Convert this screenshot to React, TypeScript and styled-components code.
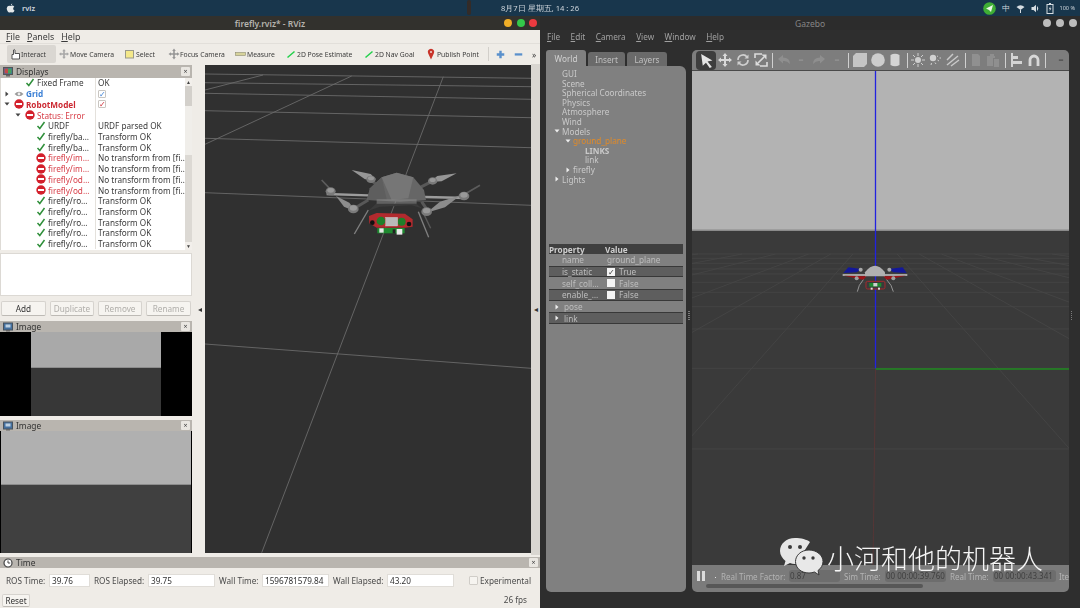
import React from "react";
import styled, { createGlobalStyle } from "styled-components";

const Global = createGlobalStyle`
  html, body { margin: 0; padding: 0; background: #222; overflow: hidden; }
  * { box-sizing: border-box; }
`;

const UI = `"Noto Sans", "Open Sans", sans-serif`;

const Page = styled.div`
  position: relative;
  width: 1080px;
  height: 608px;
  overflow: hidden;
  font-family: ${UI};
`;
const Screen = styled.div`
  width: 1080px;
  height: 608px;
  display: flex;
  flex-direction: column;
  filter: blur(0.55px);
`;
const TopBar = styled.header`
  height: 16px;
  flex: none;
  background: #18364c;
  color: #cfd6dc;
  font-size: 7.6px;
  display: grid;
  grid-template-columns: 1fr auto 1fr;
  align-items: center;
`;
const TopLeft = styled.div`
  display: flex;
  align-items: center;
  gap: 7px;
  padding-left: 6px;
  font-size: 7.5px;
  font-weight: 600;
`;
const TopClock = styled.div`
  position: relative;
`;
const Figure = styled.span`
  position: absolute;
  left: -34px;
  top: -3px;
  width: 4px;
  height: 15px;
  border-radius: 2px;
  background: #332b28;
`;
const TopRight = styled.div`
  display: flex;
  justify-content: flex-end;
  align-items: center;
  gap: 6px;
  padding-right: 5px;
  font-size: 7.5px;
`;
const Small = styled.span`
  font-size: 5.5px;
`;
const Windows = styled.div`
  flex: 1;
  min-height: 0;
  display: grid;
  grid-template-columns: 540px 540px;
`;

/* ---------- RViz ---------- */
const Rviz = styled.section`
  display: flex;
  flex-direction: column;
  min-height: 0;
  background: #efece7;
  color: #3a3a3a;
  font-size: 8.2px;
`;
const TitleBar = styled.div<{ $dark?: boolean }>`
  height: 14px;
  flex: none;
  position: relative;
  display: flex;
  align-items: center;
  justify-content: center;
  background: ${(p) => (p.$dark ? "#2c2c2c" : "#32312d")};
  color: ${(p) => (p.$dark ? "#858585" : "#b5b3ad")};
  font-size: 8.5px;
  font-weight: ${(p) => (p.$dark ? 400 : 600)};
`;
const Lights = styled.div`
  position: absolute;
  right: 3px;
  top: 3px;
  display: flex;
  gap: 4.5px;
`;
const Light = styled.span<{ $c: string }>`
  width: 8px;
  height: 8px;
  border-radius: 50%;
  background: ${(p) => p.$c};
`;
const MenuBar = styled.nav<{ $dark?: boolean }>`
  height: 13px;
  flex: none;
  display: flex;
  align-items: center;
  font-size: ${(p) => (p.$dark ? "8.2px" : "8.8px")};
  padding-left: ${(p) => (p.$dark ? "7px" : "6px")};
  gap: ${(p) => (p.$dark ? "10.5px" : "7px")};
  background: ${(p) => (p.$dark ? "#2e2e2e" : "#efece7")};
  color: ${(p) => (p.$dark ? "#a0a0a0" : "#3a3a3a")};
`;
const Toolbar = styled.div`
  height: 21px;
  flex: none;
  display: flex;
  align-items: center;
  padding-left: 7px;
  background: #efece7;
  border-top: 1px solid #e2dfda;
`;
const ToolButton = styled.div<{ $w: number; $active?: boolean }>`
  width: ${(p) => p.$w}px;
  height: 18px;
  flex: none;
  display: flex;
  align-items: center;
  padding-left: 2px;
  font-size: 6.8px;
  white-space: nowrap;
  border-radius: 2px;
  background: ${(p) => (p.$active ? "#dad7d2" : "transparent")};
`;
const ToolIcon = styled.svg`
  width: 12px;
  height: 12px;
  flex: none;
`;
const ToolSep = styled.span`
  width: 1px;
  height: 14px;
  margin: 0 7px 0 6px;
  background: #d2cfca;
`;
const ZoomGlyph = styled.svg`
  width: 9px;
  height: 9px;
  margin-right: 9px;
  flex: none;
`;
const Main = styled.div`
  flex: 1;
  min-height: 0;
  display: flex;
`;
const LeftDock = styled.aside`
  width: 192px;
  flex: none;
  display: flex;
  flex-direction: column;
  padding-top: 1px;
`;
const DockTitle = styled.div<{ $h: number; $mt?: number }>`
  height: ${(p) => p.$h}px;
  margin-top: ${(p) => p.$mt ?? 0}px;
  flex: none;
  display: flex;
  align-items: center;
  background: #b9b5af;
  padding: 0 2px 0 3px;
  gap: 3px;
  font-size: 8.4px;
  color: #333;
`;
const DockName = styled.span`
  flex: 1;
`;
const CloseBox = styled.span`
  width: 9px;
  height: 9px;
  background: #e9e6e1;
  color: #444;
  font-size: 7px;
  line-height: 9px;
  text-align: center;
  border-radius: 1px;
`;
const Tree = styled.div`
  height: 172px;
  flex: none;
  display: flex;
  background: #fff;
  overflow: hidden;
  border-left: 1px solid #dedbd6;
`;
const TreeRows = styled.div`
  flex: 1;
  min-width: 0;
  margin-top: -0.6px;
`;
const TreeRow = styled.div`
  height: 10.73px;
  display: grid;
  grid-template-columns: 95px 1fr;
  align-items: center;
  white-space: nowrap;
`;
const NameCell = styled.div<{ $level: number }>`
  display: flex;
  align-items: center;
  height: 100%;
  padding-left: ${(p) => 1 + p.$level * 11}px;
  border-right: 1px solid #e4e1dc;
`;
const ArrowSlot = styled.span`
  width: 11px;
  display: flex;
  justify-content: flex-start;
  padding-left: 1.5px;
`;
const StatusSlot = styled.span`
  width: 11px;
  height: 10px;
  margin-right: 2px;
  display: flex;
  align-items: center;
  justify-content: center;
`;
const RowName = styled.span<{ $tone?: string }>`
  color: ${(p) =>
    p.$tone === "err" ? "#d8404a" : p.$tone === "errb" ? "#cc2a33" : p.$tone === "blue" ? "#3a7fd5" : "#3a3a3a"};
  font-weight: ${(p) => (p.$tone === "errb" || p.$tone === "blue" ? 700 : 400)};
`;
const ValueCell = styled.div`
  padding-left: 2px;
  display: flex;
  align-items: center;
`;
const MiniCheck = styled.span<{ $c: string }>`
  width: 8px;
  height: 8px;
  border: 1px solid #c9c6c1;
  border-radius: 1px;
  color: ${(p) => p.$c};
  display: flex;
  align-items: center;
  justify-content: center;
  background: #fff;
  font-size: 8px;
  line-height: 1;
`;
const ScrollCol = styled.div`
  width: 7px;
  flex: none;
  display: flex;
  flex-direction: column;
  background: #dcd9d4;
`;
const ScrollEnd = styled.div`
  height: 8px;
  flex: none;
  background: #f2efeb;
  color: #444;
  font-size: 5px;
  line-height: 8px;
  text-align: center;
`;
const ScrollThumb = styled.div`
  height: 20px;
  flex: none;
  background: #d3d0cb;
`;
const ScrollLight = styled.div`
  height: 49px;
  flex: none;
  background: #f0eeea;
`;
const ScrollFill = styled.div`
  flex: 1;
`;
const EmptyBox = styled.div`
  height: 43px;
  margin-top: 3px;
  flex: none;
  background: #fff;
  border: 1px solid #dcd9d4;
`;
const ButtonRow = styled.div`
  height: 15px;
  margin-top: 5px;
  flex: none;
  display: grid;
  grid-template-columns: 45px 44px 44px 45px;
  gap: 4px;
  padding-left: 1px;
`;
const PlainButton = styled.div<{ $off?: boolean }>`
  border: 1px solid #d6d3ce;
  border-bottom-color: #bdbab5;
  border-radius: 2px;
  background: #f6f4f0;
  display: flex;
  align-items: center;
  justify-content: center;
  font-size: 8.2px;
  color: ${(p) => (p.$off ? "#b0aeaa" : "#333")};
`;
const CameraView = styled.div<{ $h: number; $side: number; $split: number; $top: string; $bottom: string }>`
  height: ${(p) => p.$h}px;
  flex: none;
  border-left: ${(p) => p.$side}px solid #000;
  border-right: ${(p) => p.$side}px solid #000;
  background: linear-gradient(
    to bottom,
    ${(p) => p.$top} ${(p) => p.$split}px,
    #8c8c8c ${(p) => p.$split}px,
    #8c8c8c ${(p) => p.$split + 1}px,
    ${(p) => p.$bottom} ${(p) => p.$split + 1}px
  );
`;
const Sash = styled.div<{ $w: number; $bg: string; $pl?: number }>`
  width: ${(p) => p.$w}px;
  flex: none;
  background: ${(p) => p.$bg};
  display: flex;
  align-items: center;
  justify-content: center;
  padding: 0 0 2px ${(p) => p.$pl ?? 0}px;
  color: #333;
  font-size: 8px;
`;
const Viewport = styled.div`
  width: 326px;
  flex: none;
  margin: 1px 0 2px;
  background: #303030;
`;
const SceneSvg = styled.svg`
  display: block;
  width: 100%;
  height: 100%;
`;
const TimeDock = styled.div`
  height: 53px;
  flex: none;
  padding-top: 2px;
  display: flex;
  flex-direction: column;
`;
const TimeRow = styled.div`
  height: 13px;
  margin-top: 6px;
  flex: none;
  display: flex;
  align-items: center;
  padding-left: 2px;
  font-size: 8.2px;
  color: #4a4a4a;
`;
const TimeLabel = styled.span<{ $w: number }>`
  width: ${(p) => p.$w}px;
  padding-left: 4px;
  white-space: nowrap;
  flex: none;
`;
const TimeInput = styled.span<{ $w: number }>`
  width: ${(p) => p.$w}px;
  height: 13px;
  flex: none;
  background: #fff;
  border: 1px solid #e0ddd8;
  padding-left: 2px;
  line-height: 11px;
  color: #333;
`;
const ExpBox = styled.span`
  width: 9px;
  height: 9px;
  margin: 0 2px 0 15px;
  background: #f6f4f0;
  border: 1px solid #d0cdc8;
  border-radius: 1px;
`;
const BottomRow = styled.div`
  height: 13px;
  margin-top: 7px;
  flex: none;
  display: flex;
  justify-content: space-between;
  padding: 0 13px 0 2px;
  font-size: 8.2px;
  color: #4a4a4a;
`;
const ResetButton = styled(PlainButton)`
  width: 28px;
`;
const Fps = styled.span`
  margin-top: 0;
`;

/* ---------- Gazebo ---------- */
const Gazebo = styled.section`
  display: flex;
  flex-direction: column;
  min-height: 0;
  background: #2e2e2e;
  color: #bcbcbc;
`;
const GzLights = styled.div`
  position: absolute;
  right: 3px;
  top: 3px;
  display: flex;
  gap: 5px;
`;
const GzBody = styled.div`
  flex: 1;
  min-height: 0;
  display: flex;
  padding: 7px 0 16px 6px;
`;
const GzLeft = styled.div`
  width: 140px;
  flex: none;
  display: flex;
  flex-direction: column;
`;
const Tabs = styled.div`
  height: 16px;
  flex: none;
  display: flex;
  gap: 2px;
  align-items: flex-end;
`;
const Tab = styled.div<{ $w: number; $on?: boolean }>`
  width: ${(p) => p.$w}px;
  height: ${(p) => (p.$on ? 16 : 14)}px;
  background: ${(p) => (p.$on ? "#808080" : "#6a6a6a")};
  color: ${(p) => (p.$on ? "#d0d0d0" : "#c0c0c0")};
  border-radius: 3px 3px 0 0;
  display: flex;
  align-items: center;
  justify-content: center;
  font-size: 8.2px;
`;
const GzPanel = styled.div`
  flex: 1;
  background: #808080;
  border-radius: 0 6px 5px 5px;
  padding-top: 3px;
  display: flex;
  flex-direction: column;
  font-size: 8.2px;
  color: #c9c9c9;
`;
const WorldTree = styled.div`
  height: 175px;
  flex: none;
`;
const WorldRow = styled.div<{ $level: number; $tone?: string }>`
  height: 9.6px;
  line-height: 9.6px;
  display: flex;
  align-items: center;
  padding-left: ${(p) => p.$level}px;
  color: ${(p) => (p.$tone === "o" ? "#e08a28" : "#c9c9c9")};
  font-weight: ${(p) => (p.$tone === "b" ? 700 : 400)};
`;
const WorldArrow = styled.span`
  width: 11px;
  display: flex;
  justify-content: center;
  margin-left: -11px;
`;
const PropTable = styled.div`
  margin: 0 3px;
`;
const PropHeader = styled.div`
  height: 10px;
  display: grid;
  grid-template-columns: 56px 1fr;
  align-items: center;
  background: #3f3f3f;
  color: #cfcfcf;
  font-weight: 700;
`;
const PropRow = styled.div<{ $band?: boolean }>`
  height: 11.7px;
  display: grid;
  grid-template-columns: 56px 1fr;
  align-items: center;
  background: ${(p) => (p.$band ? "#5e5e5e" : "#808080")};
  box-shadow: ${(p) => (p.$band ? "inset 0 1px #383838, inset 0 -1px #383838" : "none")};
  color: #bdbdbd;
`;
const PropKey = styled.span<{ $indent?: number }>`
  padding-left: ${(p) => p.$indent ?? 13}px;
  display: flex;
  align-items: center;
  gap: 4px;
  overflow: hidden;
  white-space: nowrap;
`;
const PropVal = styled.span`
  display: flex;
  align-items: center;
  gap: 4px;
  padding-left: 2px;
`;
const PropBox = styled.span`
  width: 8px;
  height: 8px;
  background: #f4f4f4;
  color: #333;
  font-size: 8px;
  line-height: 8px;
  text-align: center;
`;
const GzSash = styled.div<{ $w: number }>`
  width: ${(p) => p.$w}px;
  flex: none;
  display: flex;
  align-items: center;
  justify-content: center;
  color: #777;
  font-size: 6px;
  padding-bottom: 10px;
`;
const SashDots = styled.span`
  width: 1.5px;
  height: 10px;
  background: repeating-linear-gradient(to bottom, #7c7c7c 0 1px, transparent 1px 2px);
`;
const GzCenter = styled.div`
  width: 377px;
  flex: none;
  display: flex;
  flex-direction: column;
`;
const GzToolbar = styled.div`
  height: 21px;
  flex: none;
  display: flex;
  align-items: center;
  padding-left: 4px;
  background: #7d7d7d;
  border-radius: 5px 5px 0 0;
  border-bottom: 1px solid #4a4a4a;
  overflow: hidden;
`;
const GzSlot = styled.div<{ $w: number; $on?: boolean }>`
  width: ${(p) => p.$w}px;
  height: 19px;
  flex: none;
  display: flex;
  align-items: center;
  justify-content: center;
  border-radius: 4px;
  background: ${(p) => (p.$on ? "#3d3d3d" : "transparent")};
`;
const GzSep = styled.span`
  width: 1px;
  height: 15px;
  background: #d0d0d0;
`;
const GzScene = styled.div`
  flex: 1;
  min-height: 0;
  background: #3a3a3a;
`;
const GzStatus = styled.div`
  height: 27px;
  flex: none;
  background: #7b7b7b;
  border-radius: 0 0 5px 5px;
  padding: 4px 0 0 5px;
  display: flex;
  flex-direction: column;
  font-size: 8px;
  color: #b4b4b4;
  overflow: hidden;
`;
const GzStatusLine = styled.div`
  height: 14px;
  flex: none;
  display: flex;
  align-items: center;
  white-space: nowrap;
`;
const PauseBar = styled.span`
  width: 3px;
  height: 10px;
  margin-right: 2px;
  background: #dcdcdc;
`;
const PauseDot = styled.span`
  width: 1.5px;
  height: 1.5px;
  flex: none;
  margin: 3px -1.5px 0 8px;
  background: #e0e0e0;
`;
const StatusLabel = styled.span<{ $w: number; $ml?: number }>`
  width: ${(p) => p.$w}px;
  margin-left: ${(p) => p.$ml ?? 0}px;
  flex: none;
`;
const StatusField = styled.span<{ $w: number }>`
  width: ${(p) => p.$w}px;
  height: 12px;
  line-height: 12px;
  flex: none;
  background: #6d6d6d;
  border-radius: 3px;
  color: #404040;
  padding-left: 1px;
  overflow: hidden;
`;
const HScroll = styled.div`
  width: 217px;
  height: 4px;
  flex: none;
  margin: 1px 0 0 9px;
  border-radius: 2px;
  background: #575757;
`;

/* ---------- Watermark ---------- */
const Watermark = styled.div`
  position: absolute;
  left: 780px;
  top: 528px;
  display: flex;
  align-items: flex-start;
`;
const WaterText = styled.span`
  font-family: "Noto Sans CJK SC", sans-serif;
  font-size: 27px;
  font-weight: 300;
  line-height: 26px;
  margin-top: 17px;
  color: #f6f6f6;
  white-space: nowrap;
`;
const WaterIcon = styled.svg`
  width: 47px;
  height: 50px;
  flex: none;
`;

/* ---------- Little drawings ---------- */
const Check = () => (
  <svg width="10" height="9" viewBox="0 0 10 9">
    <path d="M1.5 5 L3.8 7.5 L8.5 1" fill="none" stroke="#2f8f3a" strokeWidth="1.5" />
  </svg>
);
const Err = () => (
  <svg width="10" height="10" viewBox="0 0 10 10">
    <circle cx="5" cy="5" r="4.7" fill="#d3202c" />
    <rect x="2" y="4" width="6" height="2" fill="#fff" />
  </svg>
);
const Eye = () => (
  <svg width="10" height="8" viewBox="0 0 10 8">
    <path d="M0.5 4 Q5 -0.5 9.5 4 Q5 8.5 0.5 4 Z" fill="#9a9a9a" />
    <circle cx="5" cy="4" r="1.4" fill="#efefef" />
  </svg>
);
const TreeArrow = ({ open, c = "#444" }: { open?: boolean; c?: string }) => (
  <svg width="6" height="6" viewBox="0 0 6 6">
    <path d={open ? "M0.5 1.5 H5.5 L3 4.5 Z" : "M1.5 0.5 V5.5 L4.5 3 Z"} fill={c} />
  </svg>
);
const Monitor = () => (
  <svg width="10" height="10" viewBox="0 0 10 10">
    <rect x="0.5" y="0.5" width="9" height="7" fill="#3b6ea8" stroke="#555" />
    <rect x="1.5" y="1.5" width="3.5" height="5" fill="#c14a4a" />
    <rect x="5" y="1.5" width="3.5" height="5" fill="#4aa05a" />
    <rect x="3" y="8" width="4" height="1.5" fill="#666" />
  </svg>
);
const PicIcon = () => (
  <svg width="10" height="10" viewBox="0 0 10 10">
    <rect x="0.5" y="1" width="9" height="7" fill="#44709f" stroke="#49525c" />
    <rect x="2.5" y="2.5" width="5" height="3" fill="#bcd0e2" />
    <rect x="3" y="8" width="4" height="1.5" fill="#666" />
  </svg>
);
const Clock = () => (
  <svg width="10" height="10" viewBox="0 0 10 10">
    <circle cx="5" cy="5" r="4" fill="#fff" stroke="#444" strokeWidth="1.2" />
    <path d="M5 2.5 V5 H7.2" fill="none" stroke="#444" />
  </svg>
);

const toolIcons: Record<string, React.ReactNode> = {
  interact: (
    <path d="M3 11 V6.5 H4.5 V2 Q5.3 1 6 2 V5.5 H10.5 V11 Z" fill="#fff" stroke="#444" strokeWidth="0.9" />
  ),
  move: (
    <path d="M6 1 L7.8 3.2 H6.8 V5.2 H8.8 V4.2 L11 6 L8.8 7.8 V6.8 H6.8 V8.8 H7.8 L6 11 L4.2 8.8 H5.2 V6.8 H3.2 V7.8 L1 6 L3.2 4.2 V5.2 H5.2 V3.2 H4.2 Z" fill="#a8a8a8" />
  ),
  select: <rect x="1.5" y="2.5" width="8" height="7.5" fill="#f4e88a" stroke="#9a9a8a" />,
  focus: (
    <path d="M6 0.5 L7.8 3 H6.8 V5.2 H9 V4.2 L11.5 6 L9 7.8 V6.8 H6.8 V9 H7.8 L6 11.5 L4.2 9 H5.2 V6.8 H3 V7.8 L0.5 6 L3 4.2 V5.2 H5.2 V3 H4.2 Z" fill="#969696" />
  ),
  measure: <rect x="0.5" y="4.5" width="10" height="3" fill="#d6d29a" stroke="#8e8c70" strokeWidth="0.6" />,
  pose: <path d="M2.5 9.5 L9.5 3.5" stroke="#21d04a" strokeWidth="1.5" />,
  pin: (
    <g>
      <path d="M6 11.5 L3.2 5.5 A3.2 3.2 0 1 1 8.8 5.5 Z" fill="#c8342a" />
      <circle cx="6" cy="4" r="1" fill="#f1d8d4" />
    </g>
  ),
};

const tools = [
  { w: 49, t: "Interact", i: "interact", active: true },
  { w: 66, t: "Move Camera", i: "move" },
  { w: 44, t: "Select", i: "select" },
  { w: 67, t: "Focus Camera", i: "focus" },
  { w: 50, t: "Measure", i: "measure" },
  { w: 78, t: "2D Pose Estimate", i: "pose" },
  { w: 62, t: "2D Nav Goal", i: "pose" },
  { w: 59, t: "Publish Point", i: "pin" },
];

type TreeItem = {
  level: number;
  name: string;
  value?: string;
  status?: "ok" | "err" | "eye";
  tone?: string;
  arrow?: "open" | "closed";
  check?: string;
};
const rows: TreeItem[] = [
  { level: 1, name: "Fixed Frame", value: "OK", status: "ok" },
  { level: 0, name: "Grid", status: "eye", tone: "blue", arrow: "closed", check: "#3a7fd5" },
  { level: 0, name: "RobotModel", status: "err", tone: "errb", arrow: "open", check: "#cc2a33" },
  { level: 1, name: "Status: Error", status: "err", tone: "err", arrow: "open" },
  { level: 2, name: "URDF", value: "URDF parsed OK", status: "ok" },
  { level: 2, name: "firefly/ba…", value: "Transform OK", status: "ok" },
  { level: 2, name: "firefly/ba…", value: "Transform OK", status: "ok" },
  { level: 2, name: "firefly/im…", value: "No transform from [fi…", status: "err", tone: "err" },
  { level: 2, name: "firefly/im…", value: "No transform from [fi…", status: "err", tone: "err" },
  { level: 2, name: "firefly/od…", value: "No transform from [fi…", status: "err", tone: "err" },
  { level: 2, name: "firefly/od…", value: "No transform from [fi…", status: "err", tone: "err" },
  { level: 2, name: "firefly/ro…", value: "Transform OK", status: "ok" },
  { level: 2, name: "firefly/ro…", value: "Transform OK", status: "ok" },
  { level: 2, name: "firefly/ro…", value: "Transform OK", status: "ok" },
  { level: 2, name: "firefly/ro…", value: "Transform OK", status: "ok" },
  { level: 2, name: "firefly/ro…", value: "Transform OK", status: "ok" },
];

const rvizLines = [
  [205, 74, 531, 78.3],
  [205, 82.7, 531, 86.7],
  [205, 93.3, 531, 99.3],
  [205, 110.7, 531, 117.7],
  [205, 138.3, 531, 147.7],
  [205, 192.7, 531, 205.3],
  [205, 344, 531, 368.3],
  [205, 90, 263, 75],
  [205, 144.3, 351.7, 76],
  [443.3, 76.7, 261.7, 552.7],
];

/* drawn in the coordinates of a 3x crop of the viewport */
const RvizDrone = () => (
  <g transform="translate(200 60) scale(0.3333)">
    <g fill="none">
      <path d="M380 402 L505 406" stroke="#9c9c9c" strokeWidth="7" />
      <path d="M675 411 L800 414" stroke="#9c9c9c" strokeWidth="7" />
      <path d="M505 420 L455 450" stroke="#585858" strokeWidth="9" />
      <path d="M665 425 L685 455" stroke="#585858" strokeWidth="9" />
      <path d="M535 378 L510 358" stroke="#585858" strokeWidth="9" />
      <path d="M655 385 L700 362" stroke="#585858" strokeWidth="9" />
      <path d="M505 450 L463 522" stroke="#808080" strokeWidth="4" />
      <path d="M655 455 L686 532" stroke="#808080" strokeWidth="4" />
      <path d="M668 455 L692 505" stroke="#5a5a5a" strokeWidth="4" />
      <path d="M365 360 L395 392" stroke="#5c5c5c" strokeWidth="5" />
      <path d="M840 376 L795 402" stroke="#5c5c5c" strokeWidth="5" />
    </g>
    <path d="M455 330 L512 342 L528 358 L495 358 Z" fill="#969696" />
    <path d="M770 340 L712 348 L690 366 L725 364 Z" fill="#969696" />
    <path d="M408 408 L448 428 L468 455 L432 440 Z" fill="#8c8c8c" />
    <path d="M782 406 L720 425 L680 458 L735 442 Z" fill="#8c8c8c" />
    <path d="M500 420 L510 385 L545 352 L590 338 L640 352 L672 390 L678 420 L600 425 Z" fill="#666" />
    <path d="M545 352 L590 338 L640 352 L625 415 L575 420 Z" fill="#767676" />
    <path d="M510 385 L545 352 L560 418 L502 420 Z" fill="#5e5e5e" />
    <path d="M530 430 L650 432 L665 445 L635 436 L540 440 L505 452 Z" fill="#3b3b3b" />
    <path d="M530 418 H650 V431 H530 Z" fill="#8a8a8a" opacity="0.55" />
    {[
      [392, 394, 12],
      [460, 447, 13],
      [513, 358, 11],
      [698, 363, 11],
      [680, 455, 13],
      [792, 408, 13],
    ].map(([x, y, r], i) => (
      <g key={i}>
        <ellipse cx={x} cy={y} rx={r + 3} ry={r} fill="#7a7a7a" />
        <ellipse cx={x} cy={y - 3} rx={r - 2} ry={r - 5} fill="#999" />
      </g>
    ))}
    <path d="M507 468 L530 459 L615 461 L638 478 V500 L615 503 H530 L508 490 Z" fill="#b12a2e" />
    <circle cx="543" cy="483" r="13" fill="#1f7f2a" />
    <circle cx="605" cy="485" r="12" fill="#1f7f2a" />
    <circle cx="517" cy="488" r="7" fill="#111" />
    <circle cx="627" cy="492" r="7" fill="#111" />
    <rect x="557" y="472" width="36" height="26" fill="#b9b9b9" stroke="#dcdcdc" />
    <rect x="532" y="504" width="82" height="16" fill="#1f8a30" />
    <rect x="538" y="505" width="13" height="13" fill="#e6e6e6" />
    <rect x="590" y="507" width="17" height="17" fill="#ececec" />
    <rect x="578" y="508" width="8" height="12" fill="#222" />
  </g>
);

const gzLevels = [255, 259.3, 264.3, 270, 275, 283.3, 293.3, 307.7, 330, 369.3, 450];
const gzRadial = [-8, -6, -4.5, -3, -2, -1, 1, 2, 3, 4.5, 6, 8];

const GzDrone = () => (
  <g transform="translate(830 250) scale(0.3333)">
    <path d="M40 72 L55 55 L95 60 L80 70 Z" fill="#13189a" />
    <path d="M230 72 L218 55 L175 60 L190 70 Z" fill="#13189a" />
    <path d="M38 76 H232 V80 H38 Z" fill="#c9c9c9" />
    <path d="M42 80 L100 92 L110 82 Z" fill="#9c1418" />
    <path d="M228 80 L170 92 L160 82 Z" fill="#9c1418" />
    <path d="M105 70 Q135 30 165 70 L165 82 H105 Z" fill="#b0b0b0" />
    <circle cx="92" cy="62" r="6" fill="#a8a8a8" />
    <circle cx="178" cy="62" r="6" fill="#a8a8a8" />
    <circle cx="80" cy="88" r="6" fill="#a0a0a0" />
    <circle cx="190" cy="88" r="6" fill="#a0a0a0" />
    <path d="M100 92 Q85 108 82 128 M170 92 Q186 108 190 128" fill="none" stroke="#a8a8a8" strokeWidth="2.5" />
    <rect x="108" y="97" width="57" height="23" rx="5" fill="#3a3a3a" stroke="#a62a2d" strokeWidth="3" />
    <rect x="118" y="102" width="36" height="11" fill="#1e8a2e" />
    <rect x="130" y="102" width="12" height="10" fill="#cfcfcf" />
    <rect x="122" y="116" width="6" height="6" fill="#ddd" />
    <rect x="144" y="116" width="6" height="6" fill="#ddd" />
  </g>
);

const Ic = ({ children, w = 14, c = "#d8d8d8" }: { children: React.ReactNode; w?: number; c?: string }) => (
  <svg width={w} height={w} viewBox="0 0 14 14" fill={c} stroke="none">
    {children}
  </svg>
);

const gzTools: { w: number; on?: boolean; sep?: boolean; n?: React.ReactNode }[] = [
  { w: 20, on: true, n: <Ic w={15} c="#e4e4e4"><path d="M2 1 L12.5 7 L8 8 L12 13 L10 14 L6.5 9 L3.5 12 Z" /></Ic> },
  { w: 18, n: <Ic><path d="M7 0 L9.5 3 H8 V6 H11 V4.5 L14 7 L11 9.5 V8 H8 V11 H9.5 L7 14 L4.5 11 H6 V8 H3 V9.5 L0 7 L3 4.5 V6 H6 V3 H4.5 Z" /></Ic> },
  { w: 18, n: <Ic c="none"><path d="M2 7 A5 5 0 0 1 11 4 M12 7 A5 5 0 0 1 3 10" stroke="#cfcfcf" strokeWidth="1.7" fill="none" /><path d="M12.5 1.5 V5.5 H8.5 Z M1.5 12.5 V8.5 H5.5 Z" fill="#cfcfcf" /></Ic> },
  { w: 18, n: <Ic c="none"><path d="M1 5 V1 H8 M13 9 V13 H6 M4 10 L10 4" stroke="#dcdcdc" strokeWidth="1.6" fill="none" /><path d="M12.5 1.5 V6.5 L7.5 1.5 Z M1.5 12.5 V7.5 L6.5 12.5 Z" fill="#dcdcdc" /></Ic> },
  { w: 5, sep: true },
  { w: 18, n: <Ic c="#8f8f8f"><path d="M1 6 L6 2 V4.5 Q13 4.5 13 11 Q10 7.5 6 8 V10.5 Z" /></Ic> },
  { w: 16, n: <Ic w={6} c="#999"><rect x="2" y="6" width="10" height="2.5" /></Ic> },
  { w: 20, n: <Ic c="#8f8f8f"><path d="M13 6 L8 2 V4.5 Q1 4.5 1 11 Q4 7.5 8 8 V10.5 Z" /></Ic> },
  { w: 16, n: <Ic w={6} c="#999"><rect x="2" y="6" width="10" height="2.5" /></Ic> },
  { w: 6, sep: true },
  { w: 18, n: <Ic c="#c4c4c4"><path d="M0 3 L3 0 H14 V11 L11 14 H0 Z" /></Ic> },
  { w: 18, n: <Ic c="#cdcdcd"><circle cx="7" cy="7" r="6.8" /></Ic> },
  { w: 16, n: <Ic c="#d4d4d4"><path d="M2.5 2 Q7 -0.5 11.5 2 V12 Q7 14.5 2.5 12 Z" /></Ic> },
  { w: 8, sep: true },
  { w: 14, n: <Ic c="none"><circle cx="7" cy="7" r="3" fill="#cfcfcf" /><path d="M7 0 V3 M7 11 V14 M0 7 H3 M11 7 H14 M2 2 L4 4 M10 10 L12 12 M2 12 L4 10 M10 4 L12 2" stroke="#cfcfcf" /></Ic> },
  { w: 20, n: <Ic c="none"><circle cx="5" cy="5" r="3.2" fill="#d2d2d2" /><path d="M9 3 L10 3.5 M9.5 7 L11 8 M7 9.5 L8 11 M3.5 10 L3 12 M11.5 5 L13 5" stroke="#cfcfcf" /></Ic> },
  { w: 16, n: <Ic c="none"><path d="M1 7 L7 1 M1 12 L12 3 M5 13 L13 7" stroke="#c8c8c8" strokeWidth="1.5" /></Ic> },
  { w: 8, sep: true },
  { w: 14, n: <Ic c="#909090"><path d="M3 1 H9 L11 3 V13 H3 Z" /></Ic> },
  { w: 20, n: <Ic c="#8f8f8f"><path d="M1 3 H4 V1 H8 V3 L9 3 V5 H7 V13 H1 Z M8 6 H13 V14 H8 Z" /></Ic> },
  { w: 4, sep: true },
  { w: 18, n: <Ic c="#d4d4d4"><path d="M2 0 H4 V3 H9 V6 H4 V8 H13 V11 H4 V14 H2 Z" /></Ic> },
  { w: 18, n: <Ic c="none"><path d="M3 13 V7 A4 4 0 0 1 11 7 V13" stroke="#d8d8d8" strokeWidth="2.8" fill="none" /></Ic> },
  { w: 4, sep: true },
  { w: 6 },
  { w: 16, n: <Ic w={6} c="#444"><rect x="2" y="6" width="10" height="2.5" /></Ic> },
];

const Apple = () => (
  <svg width="9" height="10" viewBox="0 0 10 11">
    <path d="M7 0.5 Q6.8 2.2 5.2 2.6 Q5.2 1 7 0.5 Z M5 3.2 Q6.5 2.4 8 3 Q8.8 3.4 9.2 4 Q7.6 5 8 6.6 Q8.4 7.8 9.5 8.2 Q8.6 10.4 7.4 10.6 Q6.5 10.6 5.6 10.2 Q4.8 10.2 4 10.6 Q2.8 10.8 1.6 8.8 Q0 5.8 1.4 4 Q3 2.4 5 3.2 Z" fill="#e4e8ea" />
  </svg>
);

export default function App() {
  return (
    <Page>
      <Global />
      <Screen>
        <TopBar>
          <TopLeft>
            <Apple />
            <span>rviz</span>
          </TopLeft>
          <TopClock>
            <Figure />
            8月7日 星期五, 14 : 26
          </TopClock>
          <TopRight>
            <svg width="13" height="13" viewBox="0 0 13 13">
              <circle cx="6.5" cy="6.5" r="6.3" fill="#3fae35" />
              <path d="M3 6.5 L10 3 L8 10 L6 8 Z" fill="#eaf6e6" />
            </svg>
            <span>中</span>
            <svg width="9" height="9" viewBox="0 0 9 9">
              <path d="M0.5 3 Q4.5 -0.5 8.5 3 L4.5 6 Z M4 6 H5 V9 H4 Z" fill="#d6dde2" />
            </svg>
            <svg width="9" height="9" viewBox="0 0 9 9">
              <path d="M0.5 3 H2.5 L5 0.8 V8.2 L2.5 6 H0.5 Z M6 2 Q8.5 4.5 6 7 Z" fill="#d6dde2" />
            </svg>
            <svg width="8" height="11" viewBox="0 0 8 11">
              <rect x="1" y="1.5" width="6" height="9" fill="none" stroke="#d6dde2" />
              <rect x="3" y="0" width="2" height="1.5" fill="#d6dde2" />
              <path d="M4.5 3 L2.8 6.2 H4 L3.5 8.6 L5.4 5.2 H4.2 Z" fill="#d6dde2" />
            </svg>
            <Small>100 %</Small>
          </TopRight>
        </TopBar>
        <Windows>
          <Rviz>
            <TitleBar>
              firefly.rviz* - RViz
              <Lights>
                <Light $c="#f0ae27" />
                <Light $c="#34c84a" />
                <Light $c="#ec3b3f" />
              </Lights>
            </TitleBar>
            <MenuBar>
              <span><u>F</u>ile</span>
              <span><u>P</u>anels</span>
              <span><u>H</u>elp</span>
            </MenuBar>
            <Toolbar>
              {tools.map((t) => (
                <ToolButton key={t.t} $w={t.w} $active={t.active}>
                  <ToolIcon viewBox="0 0 12 12">{toolIcons[t.i]}</ToolIcon>
                  {t.t}
                </ToolButton>
              ))}
              <ToolSep />
              <ZoomGlyph viewBox="0 0 12 12">
                <path d="M4.4 1 H7.6 V4.4 H11 V7.6 H7.6 V11 H4.4 V7.6 H1 V4.4 H4.4 Z" fill="#5a90cc" />
              </ZoomGlyph>
              <ZoomGlyph viewBox="0 0 12 12">
                <rect x="1" y="4.4" width="10" height="3" fill="#5a90cc" />
              </ZoomGlyph>
              <span>»</span>
            </Toolbar>
            <Main>
              <LeftDock>
                <DockTitle $h={13}>
                  <Monitor />
                  <DockName>Displays</DockName>
                  <CloseBox>×</CloseBox>
                </DockTitle>
                <Tree>
                  <TreeRows>
                    {rows.map((r, i) => (
                      <TreeRow key={i}>
                        <NameCell $level={r.level}>
                          <ArrowSlot>
                            {r.arrow && <TreeArrow open={r.arrow === "open"} />}
                          </ArrowSlot>
                          <StatusSlot>
                            {r.status === "ok" && <Check />}
                            {r.status === "err" && <Err />}
                            {r.status === "eye" && <Eye />}
                          </StatusSlot>
                          <RowName $tone={r.tone}>{r.name}</RowName>
                        </NameCell>
                        <ValueCell>
                          {r.check ? <MiniCheck $c={r.check}>✓</MiniCheck> : r.value}
                        </ValueCell>
                      </TreeRow>
                    ))}
                  </TreeRows>
                  <ScrollCol>
                    <ScrollEnd>▲</ScrollEnd>
                    <ScrollThumb />
                    <ScrollLight />
                    <ScrollFill />
                    <ScrollEnd>▼</ScrollEnd>
                  </ScrollCol>
                </Tree>
                <EmptyBox />
                <ButtonRow>
                  <PlainButton>Add</PlainButton>
                  <PlainButton $off>Duplicate</PlainButton>
                  <PlainButton $off>Remove</PlainButton>
                  <PlainButton $off>Rename</PlainButton>
                </ButtonRow>
                <DockTitle $h={11} $mt={5}>
                  <PicIcon />
                  <DockName>Image</DockName>
                  <CloseBox>×</CloseBox>
                </DockTitle>
                <CameraView $h={84} $side={31} $split={35} $top="#a9a9a9" $bottom="#373737" />
                <DockTitle $h={11} $mt={4}>
                  <PicIcon />
                  <DockName>Image</DockName>
                  <CloseBox>×</CloseBox>
                </DockTitle>
                <CameraView $h={122} $side={1} $split={53} $top="#b0b0b0" $bottom="#404040" />
              </LeftDock>
              <Sash $w={13} $bg="#efece7" $pl={3}>◂</Sash>
              <Viewport>
                <SceneSvg viewBox="205 65 326 488" preserveAspectRatio="none">
                  {rvizLines.map(([a, b, c, d], i) => (
                    <line key={i} x1={a} y1={b} x2={c} y2={d} stroke="#6a6a6a" strokeWidth="0.9" />
                  ))}
                  <RvizDrone />
                </SceneSvg>
              </Viewport>
              <Sash $w={9} $bg="#d9d6d1">◂</Sash>
            </Main>
            <TimeDock>
              <DockTitle $h={11}>
                <Clock />
                <DockName>Time</DockName>
                <CloseBox>×</CloseBox>
              </DockTitle>
              <TimeRow>
                <TimeLabel $w={47}>ROS Time:</TimeLabel>
                <TimeInput $w={41}>39.76</TimeInput>
                <TimeLabel $w={58}>ROS Elapsed:</TimeLabel>
                <TimeInput $w={67}>39.75</TimeInput>
                <TimeLabel $w={47}>Wall Time:</TimeLabel>
                <TimeInput $w={67}>1596781579.84</TimeInput>
                <TimeLabel $w={58}>Wall Elapsed:</TimeLabel>
                <TimeInput $w={67}>43.20</TimeInput>
                <ExpBox />
                <span>Experimental</span>
              </TimeRow>
              <BottomRow>
                <ResetButton>Reset</ResetButton>
                <Fps>26 fps</Fps>
              </BottomRow>
            </TimeDock>
          </Rviz>

          <Gazebo>
            <TitleBar $dark>
              Gazebo
              <GzLights>
                <Light $c="#bdbdbd" />
                <Light $c="#bdbdbd" />
                <Light $c="#bdbdbd" />
              </GzLights>
            </TitleBar>
            <MenuBar $dark>
              <span><u>F</u>ile</span>
              <span><u>E</u>dit</span>
              <span><u>C</u>amera</span>
              <span><u>V</u>iew</span>
              <span><u>W</u>indow</span>
              <span><u>H</u>elp</span>
            </MenuBar>
            <GzBody>
              <GzLeft>
                <Tabs>
                  <Tab $w={40} $on>World</Tab>
                  <Tab $w={37}>Insert</Tab>
                  <Tab $w={40}>Layers</Tab>
                </Tabs>
                <GzPanel>
                  <WorldTree>
                    {["GUI", "Scene", "Spherical Coordinates", "Physics", "Atmosphere", "Wind"].map((t) => (
                      <WorldRow key={t} $level={16}>{t}</WorldRow>
                    ))}
                    <WorldRow $level={16}>
                      <WorldArrow><TreeArrow open c="#eee" /></WorldArrow>Models
                    </WorldRow>
                    <WorldRow $level={27} $tone="o">
                      <WorldArrow><TreeArrow open c="#eee" /></WorldArrow>ground_plane
                    </WorldRow>
                    <WorldRow $level={39} $tone="b">LINKS</WorldRow>
                    <WorldRow $level={39}>link</WorldRow>
                    <WorldRow $level={27}>
                      <WorldArrow><TreeArrow c="#eee" /></WorldArrow>firefly
                    </WorldRow>
                    <WorldRow $level={16}>
                      <WorldArrow><TreeArrow c="#eee" /></WorldArrow>Lights
                    </WorldRow>
                  </WorldTree>
                  <PropTable>
                    <PropHeader>
                      <span>Property</span>
                      <span>Value</span>
                    </PropHeader>
                    <PropRow>
                      <PropKey>name</PropKey>
                      <PropVal>ground_plane</PropVal>
                    </PropRow>
                    <PropRow $band>
                      <PropKey>is_static</PropKey>
                      <PropVal><PropBox>✓</PropBox>True</PropVal>
                    </PropRow>
                    <PropRow>
                      <PropKey>self_coll…</PropKey>
                      <PropVal><PropBox />False</PropVal>
                    </PropRow>
                    <PropRow $band>
                      <PropKey>enable_…</PropKey>
                      <PropVal><PropBox />False</PropVal>
                    </PropRow>
                    <PropRow>
                      <PropKey $indent={5}><TreeArrow c="#eee" />pose</PropKey>
                    </PropRow>
                    <PropRow $band>
                      <PropKey $indent={5}><TreeArrow c="#eee" />link</PropKey>
                    </PropRow>
                  </PropTable>
                </GzPanel>
              </GzLeft>
              <GzSash $w={6}><SashDots /></GzSash>
              <GzCenter>
                <GzToolbar>
                  {gzTools.map((t, i) => (
                    <GzSlot key={i} $w={t.w} $on={t.on}>
                      {t.sep ? <GzSep /> : t.n}
                    </GzSlot>
                  ))}
                </GzToolbar>
                <GzScene>
                  <SceneSvg viewBox="692 72 377 494" preserveAspectRatio="none">
                    <rect x="692" y="72" width="377" height="159" fill="#b3b3b3" />
                    <rect x="692" y="230.5" width="377" height="1.5" fill="#8a8a8a" />
                    {gzLevels.map((y) => (
                      <line key={y} x1="692" y1={y} x2="1069" y2={y} stroke="#464646" strokeWidth="0.8" />
                    ))}
                    {gzRadial.map((k) => {
                      const top = 255;
                      const bottom = 566;
                      const at = (y: number) => 875 + (k * 123 * (y - 230)) / 139;
                      return (
                        <line key={k} x1={at(top)} y1={top} x2={at(bottom)} y2={bottom} stroke="#464646" strokeWidth="0.8" />
                      );
                    })}
                    <line x1="875.5" y1="72" x2="875.5" y2="369.5" stroke="#2222e0" strokeWidth="1.3" />
                    <line x1="875.5" y1="370" x2="1069" y2="370" stroke="#1f8a1f" strokeWidth="1.3" />
                    <line x1="875.5" y1="370" x2="873" y2="566" stroke="#5c3535" strokeWidth="0.8" />
                    <GzDrone />
                  </SceneSvg>
                </GzScene>
                <GzStatus>
                  <GzStatusLine>
                    <PauseBar />
                    <PauseBar />
                    <PauseDot />
                    <StatusLabel $w={68} $ml={6.5}>Real Time Factor:</StatusLabel>
                    <StatusField $w={51}>0.87</StatusField>
                    <StatusLabel $w={41} $ml={4}>Sim Time:</StatusLabel>
                    <StatusField $w={61}>00 00:00:39.760</StatusField>
                    <StatusLabel $w={43} $ml={4}>Real Time:</StatusLabel>
                    <StatusField $w={63}>00 00:00:43.341</StatusField>
                    <StatusLabel $w={10} $ml={3}>Iter</StatusLabel>
                  </GzStatusLine>
                  <HScroll />
                </GzStatus>
              </GzCenter>
              <GzSash $w={5}><SashDots /></GzSash>
            </GzBody>
          </Gazebo>
        </Windows>
      </Screen>
      <Watermark>
        <WaterIcon viewBox="0 0 47 50">
          <path d="M15 10 C6 10 0 16 0 23 C0 27 2.5 30.5 5.5 33 L4 38 L10 35 C12 36 14 36.2 16 36 L30 14 C27 11.5 21 10 15 10 Z" fill="#e6e6e6" />
          <circle cx="10" cy="19" r="2" fill="#3a3a3a" />
          <circle cx="20" cy="19" r="2" fill="#3a3a3a" />
          <path d="M29 22 C21 22 15.5 27.5 15.5 33.5 C15.5 40 21 45 29 45 C31 45 33 44.5 34.5 44 L39 47 L38 42.5 C41 40.5 43 37 43 33.5 C43 27.5 37 22 29 22 Z" fill="#e8e8e8" stroke="#3a3a3a" strokeWidth="1" />
          <circle cx="24" cy="30" r="1.7" fill="#3a3a3a" />
          <circle cx="33" cy="30" r="1.7" fill="#3a3a3a" />
        </WaterIcon>
        <WaterText>小河和他的机器人</WaterText>
      </Watermark>
    </Page>
  );
}
